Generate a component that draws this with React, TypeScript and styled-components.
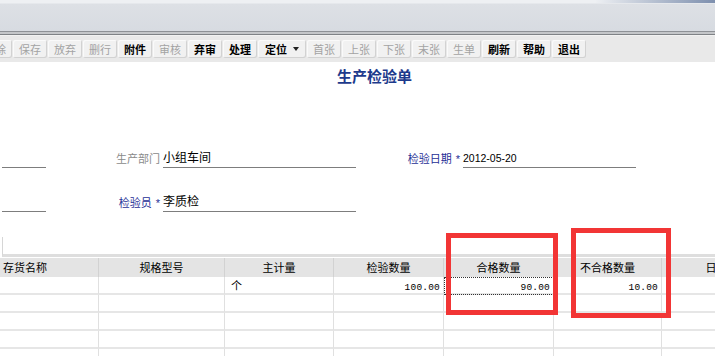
import React from 'react';
import styled, { createGlobalStyle } from 'styled-components';

const GlobalStyle = createGlobalStyle`
  html, body {
    margin: 0;
    padding: 0;
    background: #fff;
    overflow: hidden;
  }
  body {
    font-family: "Noto Sans CJK SC", "Liberation Sans", sans-serif;
    font-size: 11px;
    color: #000;
  }
`;

const Page = styled.div`
  position: relative;
  width: 715px;
  height: 356px;
  overflow: hidden;
`;

const TopBand = styled.div`
  height: 31px;
  background: linear-gradient(#eef0f3 0, #eef0f3 3px, #dde0e5 4px, #d7dbe1 100%);
  position: relative;
  &::after {
    content: '';
    position: absolute;
    right: 0;
    top: 0;
    width: 120px;
    height: 3px;
    background: linear-gradient(90deg, rgba(120, 140, 170, 0), #7d8fae);
  }
`;

const Divider = styled.div`
  height: 5px;
  background: linear-gradient(#8e9196 0, #8e9196 1px, #c4c6c9 1px, #c4c6c9 3px, #7f8286 3px, #7f8286 4px, #f2f2f2 4px);
`;

const Toolbar = styled.div`
  height: 26px;
  background: #e9e9e9;
  display: flex;
  align-items: center;
  gap: 1px;
  margin-left: -22px;
`;

const ToolButton = styled.div<{ $enabled?: boolean; $wide?: boolean }>`
  height: 18px;
  padding: 0 ${(p) => (p.$wide ? '7px' : '6px')};
  display: flex;
  align-items: center;
  gap: 6px;
  background: #f1f1f1;
  border-radius: 2px;
  box-shadow: inset -1px -1px 0 #d2d2d2, inset 1px 1px 0 #fafafa;
  color: ${(p) => (p.$enabled ? '#000' : '#a3a3a3')};
  font-weight: ${(p) => (p.$enabled ? 700 : 400)};
  font-size: 11px;
  white-space: nowrap;
`;

const Caret = styled.span`
  width: 0;
  height: 0;
  border-left: 3.5px solid transparent;
  border-right: 3.5px solid transparent;
  border-top: 4px solid #222;
`;

const Title = styled.div`
  height: 28px;
  line-height: 28px;
  text-align: center;
  padding-left: 34px;
  font-size: 15px;
  font-weight: 700;
  color: #1d3a8c;
`;

const Form = styled.div`
  padding-top: 58px;
  display: flex;
  flex-direction: column;
  gap: 24px;
`;

const FormRow = styled.div`
  display: flex;
  align-items: flex-end;
  height: 20px;
`;

const Field = styled.div<{ $w: number }>`
  width: ${(p) => p.$w}px;
  height: 19px;
  border-bottom: 1px solid #7d7d7d;
  line-height: 18px;
  font-size: 12px;
  color: #000;
  white-space: nowrap;
`;

const DateValue = styled.span`
  font-family: "Liberation Sans", "Noto Sans", sans-serif;
  font-size: 10.5px;
`;

const Label = styled.div<{ $w: number; $required?: boolean }>`
  width: ${(p) => p.$w}px;
  padding-right: 3px;
  box-sizing: border-box;
  text-align: right;
  line-height: 18px;
  height: 19px;
  font-size: 11px;
  color: ${(p) => (p.$required ? '#1f2f96' : '#8a8a8a')};
  white-space: nowrap;
`;

const Star = styled.span`
  margin-left: 4px;
  font-family: "Liberation Sans", sans-serif;
`;

const Spacer = styled.div<{ $w: number }>`
  width: ${(p) => p.$w}px;
`;

const TableArea = styled.div`
  margin-top: 25px;
`;

const TableTop = styled.div`
  height: 17px;
  margin-left: 2px;
  border-left: 1px solid #d6d6d6;
  border-bottom: 3px solid #dedede;
`;

const Grid = styled.div`
  display: grid;
  grid-template-columns: 99px 126px 109px 110px 110px 108px 110px;
  margin-top: 1px;
`;

const HeadCell = styled.div<{ $align?: string }>`
  height: 19px;
  line-height: 19px;
  background: #e4e4e4;
  border-right: 1px solid #d2d2d2;
  text-align: ${(p) => p.$align || 'center'};
  padding: 0 3px;
  font-size: 11px;
  white-space: nowrap;
  overflow: hidden;
`;

const Cell = styled.div<{ $align?: string; $focus?: boolean }>`
  height: 16px;
  line-height: 16px;
  border-right: 1px solid #e0e0e0;
  border-bottom: 2px solid #e6e6e6;
  text-align: ${(p) => p.$align || 'left'};
  padding: 0 3px 0 6px;
  font-size: 11px;
  white-space: nowrap;
  outline: ${(p) => (p.$focus ? '1px dotted #333' : 'none')};
  outline-offset: -1px;
`;

const Num = styled.span`
  font-family: "Liberation Mono", monospace;
  font-size: 9.5px;
  letter-spacing: 0.2px;
`;

const Marker = styled.div<{ $x: number; $y: number; $w: number; $h: number }>`
  position: absolute;
  left: ${(p) => p.$x}px;
  top: ${(p) => p.$y}px;
  width: ${(p) => p.$w}px;
  height: ${(p) => p.$h}px;
  box-sizing: border-box;
  border: 5px solid #f23535;
`;

const buttons: { label: string; enabled?: boolean; caret?: boolean }[] = [
  { label: '删除' },
  { label: '保存' },
  { label: '放弃' },
  { label: '删行' },
  { label: '附件', enabled: true },
  { label: '审核' },
  { label: '弃审', enabled: true },
  { label: '处理', enabled: true },
  { label: '定位', enabled: true, caret: true },
  { label: '首张' },
  { label: '上张' },
  { label: '下张' },
  { label: '末张' },
  { label: '生单' },
  { label: '刷新', enabled: true },
  { label: '帮助', enabled: true },
  { label: '退出', enabled: true },
];

const headers: { text: string; align?: string }[] = [
  { text: '存货名称', align: 'left' },
  { text: '规格型号' },
  { text: '主计量' },
  { text: '检验数量' },
  { text: '合格数量' },
  { text: '不合格数量' },
  { text: '日期' },
];

const rows = [
  ['', '', '个', '100.00', '90.00', '10.00', ''],
  ['', '', '', '', '', '', ''],
  ['', '', '', '', '', '', ''],
  ['', '', '', '', '', '', ''],
  ['', '', '', '', '', '', ''],
];

const App: React.FC = () => {
  return (
    <Page>
      <GlobalStyle />
      <TopBand />
      <Divider />
      <Toolbar>
        {buttons.map((b) => (
          <ToolButton key={b.label} $enabled={b.enabled} $wide={b.caret}>
            {b.label}
            {b.caret && <Caret />}
          </ToolButton>
        ))}
      </Toolbar>
      <Title>生产检验单</Title>
      <Form>
        <FormRow>
          <Spacer $w={2} />
          <Field $w={44} />
          <Label $w={117}>生产部门</Label>
          <Field $w={193}>小组车间</Field>
          <Label $w={107} $required>
            检验日期<Star>*</Star>
          </Label>
          <Field $w={173}>
            <DateValue>2012-05-20</DateValue>
          </Field>
        </FormRow>
        <FormRow>
          <Spacer $w={2} />
          <Field $w={44} />
          <Label $w={117} $required>
            检验员<Star>*</Star>
          </Label>
          <Field $w={193}>李质检</Field>
        </FormRow>
      </Form>
      <TableArea>
        <TableTop />
        <Grid>
          {headers.map((h) => (
            <HeadCell key={h.text} $align={h.align}>
              {h.text}
            </HeadCell>
          ))}
          {rows.map((r, ri) =>
            r.map((v, ci) => (
              <Cell
                key={`${ri}-${ci}`}
                $align={ci >= 3 ? 'right' : 'left'}
                $focus={ri === 0 && ci === 4}
              >
                {ci >= 3 ? <Num>{v}</Num> : v}
              </Cell>
            ))
          )}
        </Grid>
      </TableArea>
      <Marker $x={446} $y={233} $w={112} $h={82} />
      <Marker $x={571} $y={228} $w={100} $h={90} />
    </Page>
  );
};

export default App;
